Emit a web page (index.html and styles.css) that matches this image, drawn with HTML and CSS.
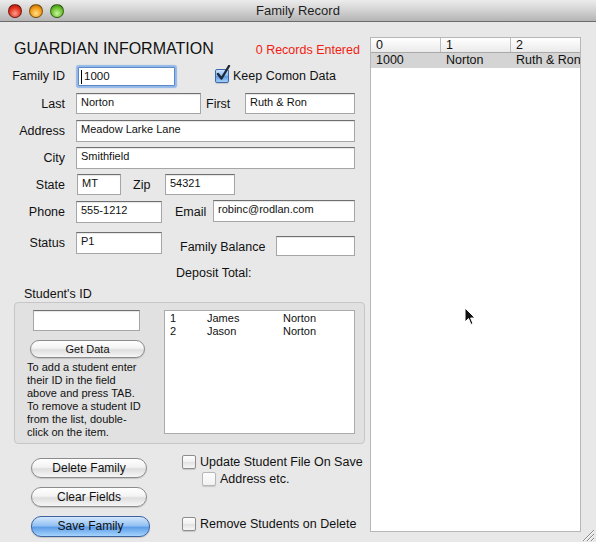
FILE: index.html
```
<!DOCTYPE html>
<html><head>
<title>Family Record</title>
<link rel="stylesheet" href="styles.css">
<meta charset="UTF-8">
</head>
<body>
<div class="window">

<div class="titlebar">
  <div class="lights">
    <span class="light red"></span><span class="light amber"></span><span class="light green"></span>
  </div>
  <div class="title">Family Record</div>
  <div></div>
</div>

<div class="content">
  <div class="form">
    <div class="head-row">
      <h1>GUARDIAN INFORMATION</h1>
      <span class="count">0 Records Entered</span>
    </div>

    <div class="row">
      <span class="lbl">Family ID</span>
      <div class="field focus w-id"><span class="caret"></span>1000</div>
      <span class="cb checked keep"><svg width="16" height="18" viewBox="0 0 16 18"><path d="M3 9 L6.5 13.5 L14 1" fill="none" stroke="#1c2a3a" stroke-width="2.4" stroke-linecap="round" stroke-linejoin="round"/></svg></span>
      <span class="keep-lbl">Keep Comon Data</span>
    </div>

    <div class="row h21">
      <span class="lbl">Last</span>
      <div class="field h21 w-last">Norton</div>
      <span class="sub first">First</span>
      <div class="field h21 w-first">Ruth &amp; Ron</div>
    </div>

    <div class="row">
      <span class="lbl">Address</span>
      <div class="field w-full">Meadow Larke Lane</div>
    </div>

    <div class="row r5">
      <span class="lbl">City</span>
      <div class="field w-full">Smithfield</div>
    </div>

    <div class="row h21 r5">
      <span class="lbl">State</span>
      <div class="field h21 w-state">MT</div>
      <span class="sub zip">Zip</span>
      <div class="field h21 w-zip">54321</div>
    </div>

    <div class="row">
      <span class="lbl">Phone</span>
      <div class="field w-short">555-1212</div>
      <span class="sub email">Email</span>
      <div class="field w-email">robinc@rodlan.com</div>
    </div>

    <div class="row status-row">
      <span class="lbl">Status</span>
      <div class="field w-short">P1</div>
      <span class="sub balance">Family Balance</span>
      <div class="field h20 w-balance"></div>
    </div>

    <div class="note deposit">Deposit Total:</div>
    <div class="note student">Student's ID</div>

    <div class="group">
      <div class="g-left">
        <div class="field h21 w-sid"></div>
        <div class="btn small">Get Data</div>
        <p class="help">To add a student enter<br>their ID in the field<br>above and press TAB.<br>To remove a student ID<br>from the list, double-<br>click on the item.</p>
      </div>
      <div class="g-list">
        <div class="l-row"><span>1</span><span>James</span><span>Norton</span></div>
        <div class="l-row"><span>2</span><span>Jason</span><span>Norton</span></div>
      </div>
    </div>

    <div class="bottom">
      <div class="btns">
        <div class="btn">Delete Family</div>
        <div class="btn">Clear Fields</div>
        <div class="btn blue">Save Family</div>
      </div>
      <div class="checks">
        <div class="check-row"><span class="cb"></span>Update Student File On Save</div>
        <div class="check-row sub-check"><span class="cb dim"></span>Address etc.</div>
        <div class="check-row remove"><span class="cb"></span>Remove Students on Delete</div>
      </div>
    </div>
  </div>

  <div class="records">
    <div class="thead"><span>0</span><span>1</span><span>2</span></div>
    <div class="trow"><span>1000</span><span>Norton</span><span>Ruth &amp; Ron</span></div>
  </div>

  <div class="grip">
    <svg width="14" height="15" viewBox="0 0 14 15">
      <path d="M2 14 L13 3 M6 14 L13 7 M10 14 L13 11" stroke="#8a8a8a" stroke-width="1"/>
      <path d="M3 14 L13 4 M7 14 L13 8 M11 14 L13 12" stroke="#fafafa" stroke-width="1"/>
    </svg>
  </div>
</div>

<svg class="cursor" width="12" height="19" viewBox="0 0 12 19">
  <path d="M1 1 L1 15 L4.5 11.5 L7 17.5 L9 16.6 L6.6 11 L11 11 Z" fill="#111" stroke="#fff" stroke-width="1"/>
</svg>

</div>
</body></html>
```

FILE: styles.css
```
body {
  margin: 0;
  font-family: "Liberation Sans", Arial, sans-serif;
  color: #111;
}

.window {
  position: relative;
  width: 596px;
  height: 542px;
  background: #e8e8e8;
  overflow: hidden;
}

/* title bar */
.titlebar {
  height: 21px;
  border-bottom: 1px solid #6c6c6c;
  background: linear-gradient(#ececec, #d2d2d2 50%, #b4b4b4);
  display: grid;
  grid-template-columns: 1fr auto 1fr;
  align-items: center;
}
.lights { display: flex; gap: 7px; padding-left: 8px; }
.light {
  width: 14px; height: 14px;
  border-radius: 50%;
  box-sizing: border-box;
  border: 1px solid rgba(0,0,0,.45);
}
.red   { background: radial-gradient(circle at 50% 70%, #ff9c8c, #e2321f 55%, #9c1206); }
.amber { background: radial-gradient(circle at 50% 70%, #ffe08a, #f19a14 55%, #a35a02); }
.green { background: radial-gradient(circle at 50% 70%, #c8f5a0, #6ac02c 55%, #2f7a0c); }
.title { font-size: 13px; color: #1e1e1e; }

.content { display: flex; height: 520px; }

/* left form */
.form { width: 370px; }

.head-row {
  display: flex;
  align-items: center;
  height: 20px;
  margin-top: 17px;
  padding-left: 14px;
}
h1 { margin: 0; font-size: 16px; font-weight: normal; color: #111; }
.count { margin-left: 42px; margin-top: 2px; color: #f21c10; font-size: 12.5px; }

.row {
  display: flex;
  align-items: center;
  height: 22px;
  margin-top: 6px;
  font-size: 12.5px;
}
.row.h21 { height: 21px; }
.row.r5 { margin-top: 5px; }
.lbl { width: 65px; margin-right: 11px; text-align: right; }

.field {
  box-sizing: border-box;
  height: 22px;
  background: #fff;
  border: 1px solid #a6a6a6;
  border-top-color: #6f6f6f;
  box-shadow: inset 0 1px 1px rgba(0,0,0,.1);
  font-size: 11px;
  line-height: 13px;
  padding: 2px 0 0 4px;
  white-space: nowrap;
  overflow: hidden;
  flex: none;
}
.field.h21 { height: 21px; }
.field.h20 { height: 20px; }
.field.focus {
  height: 19px;
  margin: 0 2px;
  border: 1px solid #5d89c8;
  border-radius: 1px;
  box-shadow: 0 0 1px 2px #92b7e9;
  padding: 2px 0 0 2px;
  font-size: 11.5px;
}
.caret {
  display: inline-block;
  width: 1px; height: 14px;
  border-left: 1px solid #000;
  vertical-align: top;
  margin-right: 1px;
}

.w-id { width: 97px; }
.w-last { width: 125px; }
.w-first { width: 110px; }
.w-full { width: 279px; }
.w-state { width: 44px; margin-left: 1px; }
.w-zip { width: 70px; }
.w-short { width: 86px; }
.w-email { width: 142px; margin-top: -2px; }
.w-balance { width: 79px; }
.w-sid { width: 107px; margin-left: 6px; }

.sub { flex: none; }
.first { margin-left: 5px; width: 39px; }
.zip { margin-left: 12px; width: 32px; }
.email { margin-left: 13px; width: 38px; }
.balance { margin-left: 18px; width: 96px; margin-top: 8px; }
.status-row { height: 24px; margin-top: 9px; align-items: flex-start; }
.status-row .lbl { line-height: 22px; }
.status-row .w-balance { margin-top: 4px; }

/* checkboxes */
.cb {
  position: relative;
  width: 14px; height: 14px;
  flex: none;
  box-sizing: border-box;
  border: 1px solid #8d8d8d;
  border-radius: 2px;
  background: linear-gradient(#fdfdfd, #f0f0f0 50%, #e2e2e2 51%, #f6f6f6);
  box-shadow: 0 1px 1px rgba(0,0,0,.15);
}
.cb.dim { border-color: #b7b7b7; background: linear-gradient(#fcfcfc, #f2f2f2); }
.cb.checked {
  border-color: #3b69a8;
  background: linear-gradient(#cfe3fb, #86b6ee 50%, #5c98e2 51%, #a6d0fa);
}
.cb svg { position: absolute; left: -1px; top: -5px; }
.keep { margin-left: 38px; }
.keep-lbl { margin-left: 4px; }

.note { font-size: 12.5px; height: 14px; line-height: 14px; }
.deposit { margin-top: 10px; padding-left: 176px; }
.student { margin-top: 7px; padding-left: 24px; }

/* student group */
.group {
  margin: 1px 0 0 14px;
  width: 351px;
  height: 142px;
  box-sizing: border-box;
  border: 1px solid #c6c6c6;
  border-radius: 4px;
  background: #e1e1e1;
  display: flex;
  padding: 7px 0 0 12px;
}
.g-left { width: 118px; flex: none; }
.help { margin: 3px 0 0; font-size: 11px; line-height: 13px; white-space: nowrap; }
.g-list {
  margin-left: 19px;
  width: 191px;
  height: 124px;
  box-sizing: border-box;
  background: #fff;
  border: 1px solid #ababab;
  padding: 1px 5px 0;
  font-size: 11px;
  line-height: 13px;
}
.l-row { display: grid; grid-template-columns: 37px 76px auto; }

/* buttons */
.btn {
  box-sizing: border-box;
  width: 116px;
  height: 20px;
  border: 1px solid #8b8b8b;
  border-radius: 10px;
  background: linear-gradient(#ffffff, #f3f3f3 45%, #dedede 55%, #f6f6f6);
  box-shadow: 0 1px 1px rgba(0,0,0,.15);
  text-align: center;
  font-size: 12px;
  line-height: 18px;
}
.btn.small { width: 115px; height: 18px; margin: 9px 0 0 3px; font-size: 11px; line-height: 16px; }
.btn.blue {
  width: 119px;
  height: 21px;
  line-height: 19px;
  border-color: #3c62a0;
  background: linear-gradient(#d4e7fc, #94c2f3 45%, #5f9ee8 55%, #a5d4fd);
}

.bottom { display: flex; }
.btns { margin-left: 31px; width: 119px; padding-top: 14px; }
.btns .btn + .btn { margin-top: 9px; }
.checks { margin-left: 32px; padding-top: 11px; font-size: 12.5px; }
.check-row { display: flex; align-items: center; gap: 4px; height: 14px; white-space: nowrap; }
.sub-check { margin: 3px 0 0 20px; }
.remove { margin-top: 31px; }

/* records table */
.records {
  width: 211px;
  height: 495px;
  margin-top: 15px;
  box-sizing: border-box;
  border: 1px solid #b7b7b7;
  background: #fff;
  overflow: hidden;
  flex: none;
}
.thead, .trow { display: flex; height: 15px; font-size: 12.5px; white-space: nowrap; }
.thead {
  box-sizing: border-box;
  border-bottom: 1px solid #a9a9a9;
  background: linear-gradient(#ffffff, #eaeaea);
}
.thead span, .trow span {
  flex: none;
  width: 70px;
  box-sizing: border-box;
  padding-left: 5px;
  line-height: 14px;
}
.thead span { border-right: 1px solid #bdbdbd; }
.trow { background: #d4d4d4; }
.trow span { line-height: 15px; }

.grip { align-self: flex-end; width: 15px; height: 15px; }

.cursor { position: absolute; left: 464px; top: 307px; }
```
